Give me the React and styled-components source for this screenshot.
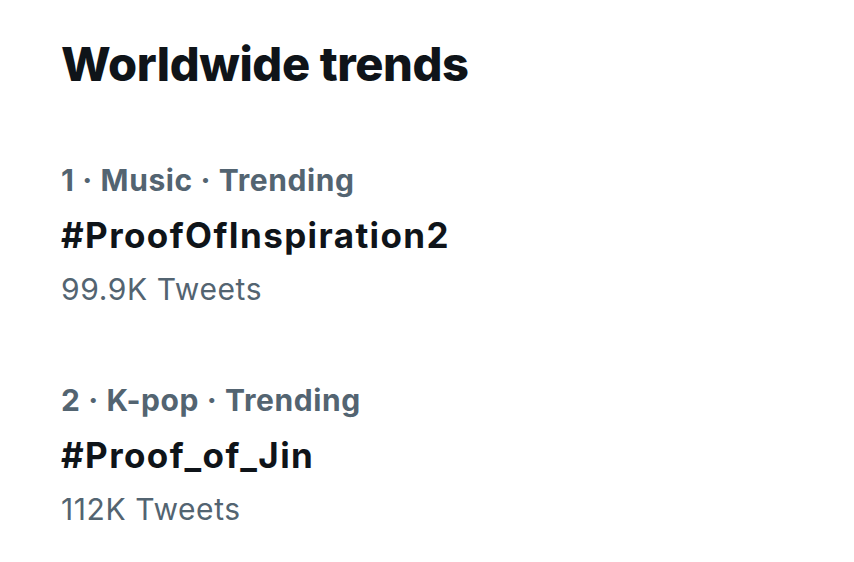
import React from "react";
import styled, { createGlobalStyle } from "styled-components";

const Global = createGlobalStyle`
  html, body { margin: 0; padding: 0; background: #ffffff; }
  body { font-family: Inter, "Noto Sans", "Liberation Sans", sans-serif; -webkit-font-smoothing: antialiased; }
`;

const Panel = styled.section`
  width: 854px;
  height: 562px;
  box-sizing: border-box;
  padding: 34px 0 0 61px;
  background: #ffffff;
  color: #0f1419;
`;

const Title = styled.h2`
  margin: 0;
  font-size: 47px;
  line-height: 60px;
  font-weight: 800;
  letter-spacing: -0.4px;
  color: #0f1419;
`;

const List = styled.div`
  display: flex;
  flex-direction: column;
  gap: 74px;
  margin-top: 68px;
`;

const Trend = styled.div`
  display: flex;
  flex-direction: column;
`;

const Meta = styled.div`
  font-size: 30px;
  line-height: 36px;
  font-weight: 700;
  letter-spacing: 0.6px;
  color: #536471;
`;

const Tag = styled.div`
  margin-top: 17px;
  font-size: 35px;
  line-height: 40px;
  font-weight: 700;
  letter-spacing: 1.4px;
  color: #0f1419;
`;

const Count = styled.div`
  margin-top: 15px;
  font-size: 30px;
  line-height: 38px;
  font-weight: 400;
  letter-spacing: 0.6px;
  color: #536471;
`;

const trends = [
  { rank: 1, cat: "Music", tag: "#ProofOfInspiration2", count: "99.9K Tweets" },
  { rank: 2, cat: "K-pop", tag: "#Proof_of_Jin", count: "112K Tweets" },
];

export default function App() {
  return (
    <Panel>
      <Global />
      <Title>Worldwide trends</Title>
      <List>
        {trends.map((t) => (
          <Trend key={t.rank}>
            <Meta>{t.rank} · {t.cat} · Trending</Meta>
            <Tag>{t.tag}</Tag>
            <Count>{t.count}</Count>
          </Trend>
        ))}
      </List>
    </Panel>
  );
}
